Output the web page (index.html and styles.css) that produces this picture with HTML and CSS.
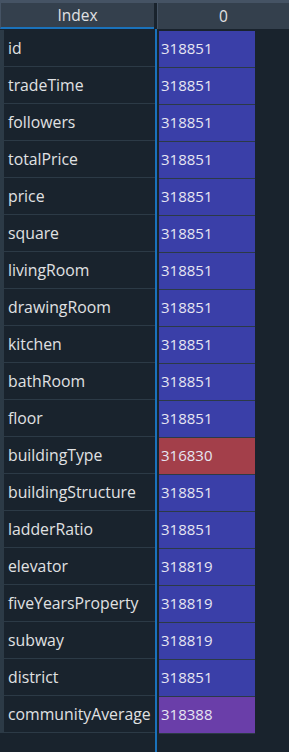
FILE: index.html
```html
<!DOCTYPE html>
<html lang="en">
<head>
  <meta charset="UTF-8" />
  <title>Series viewer</title>
  <link rel="stylesheet" href="styles.css">
</head>
<body>

<!-- Null-count table: index column + one value column -->
<div class="table">
  <div class="header">
    <div class="hcell index-head">Index</div>
    <div class="hcell col-head">0</div>
  </div>

  <div class="body">
    <div class="index-col">
      <div class="icell">id</div>
      <div class="icell">tradeTime</div>
      <div class="icell">followers</div>
      <div class="icell">totalPrice</div>
      <div class="icell">price</div>
      <div class="icell">square</div>
      <div class="icell">livingRoom</div>
      <div class="icell">drawingRoom</div>
      <div class="icell">kitchen</div>
      <div class="icell">bathRoom</div>
      <div class="icell">floor</div>
      <div class="icell">buildingType</div>
      <div class="icell">buildingStructure</div>
      <div class="icell">ladderRatio</div>
      <div class="icell">elevator</div>
      <div class="icell">fiveYearsProperty</div>
      <div class="icell">subway</div>
      <div class="icell">district</div>
      <div class="icell">communityAverage</div>
    </div>

    <div class="value-col">
      <div class="vcell">318851</div>
      <div class="vcell">318851</div>
      <div class="vcell">318851</div>
      <div class="vcell">318851</div>
      <div class="vcell">318851</div>
      <div class="vcell">318851</div>
      <div class="vcell">318851</div>
      <div class="vcell">318851</div>
      <div class="vcell">318851</div>
      <div class="vcell">318851</div>
      <div class="vcell">318851</div>
      <div class="vcell low">316830</div>
      <div class="vcell">318851</div>
      <div class="vcell">318851</div>
      <div class="vcell">318819</div>
      <div class="vcell">318819</div>
      <div class="vcell">318819</div>
      <div class="vcell">318851</div>
      <div class="vcell mid">318388</div>
    </div>
  </div>
</div>

</body>
</html>
```

FILE: styles.css
```css
body {
  margin: 0;
  background-color: #19232d;
  font-family: "Open Sans", "Noto Sans", sans-serif;
  color: #e0e1e3;
  overflow: hidden;
}
.table {
  height: 752px;
  border-top: 3px solid #455364;
}
.header {
  display: flex;
  height: 26px;
  background-color: #19232d;
}
.hcell {
  background-color: #34404d;
  font-size: 15.5px;
  line-height: 25px;
  text-align: center;
  border-left: 1px solid #455364;
}
.index-head {
  width: 154px;
  margin-right: 2px;
  border-bottom: 2px solid #1a72bb;
  box-sizing: border-box;
  line-height: 24px;
}
.col-head {
  flex: 1;
  margin-left: 1px;
  line-height: 26px;
}
.body {
  display: flex;
  height: 723px;
}
.index-col {
  width: 155px;
  border-right: 2px solid #1a72bb;
  padding-top: 1px;
}
.icell {
  height: 36px;
  line-height: 36px;
  border-bottom: 1px solid #2c3a46;
  border-left: 4px solid #2c3a46;
  padding-left: 4px;
  font-size: 15.8px;
  white-space: nowrap;
}
.value-col {
  padding-left: 2px;
  padding-top: 2px;
}
.vcell {
  width: 94px;
  height: 36px;
  line-height: 34px;
  border-bottom: 1px solid #2c3a46;
  background-color: #3a3fa8;
  padding-left: 2px;
  font-size: 15px;
  color: #e6e6f2;
}
.vcell.low {
  background-color: #a33f4a;
}
.vcell.mid {
  background-color: #6a3ea9;
}
```
